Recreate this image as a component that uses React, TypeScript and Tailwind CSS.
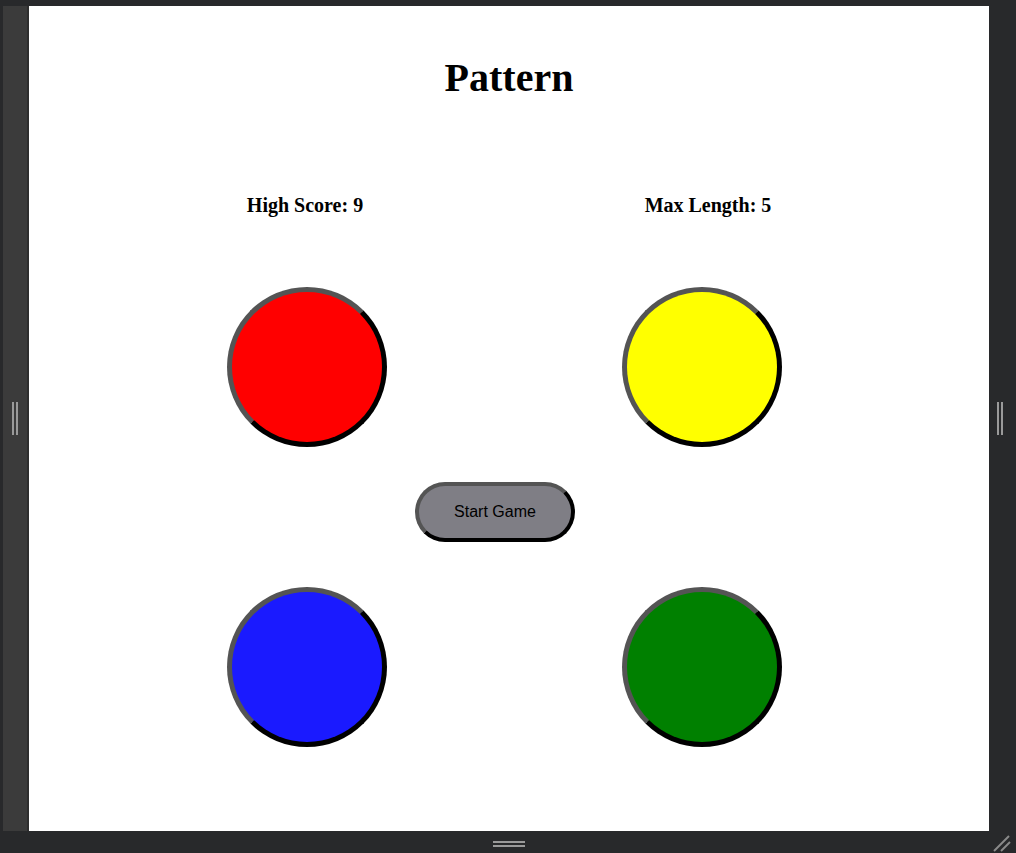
import React from "react";

function Circle({ color }: { color: string }) {
  return (
    <div
      className={`w-[160px] h-[160px] rounded-full border-[5px] border-black [--tw-border-style:outset] [border-style:outset] ${color}`}
    />
  );
}

export default function App() {
  return (
    <div className="relative w-[1016px] h-[853px] bg-[#28292b] flex flex-col overflow-hidden">
      <div className="h-[6px] shrink-0" />
      <div className="flex h-[825px] shrink-0">
        {/* left strip */}
        <div className="w-[29px] shrink-0 flex">
          <div className="w-[3px]" />
          <div className="w-[24px] bg-[#3b3b3b] flex items-center pl-[9px] gap-[2px]">
            <div className="w-[2px] h-[33px] bg-[#9a9a9a]" />
            <div className="w-[2px] h-[33px] bg-[#9a9a9a]" />
          </div>
          <div className="w-[2px] bg-[#2e2e2e]" />
        </div>
        {/* main panel */}
        <div className="w-[960px] shrink-0 bg-white flex flex-col font-['Liberation_Serif','Times_New_Roman',serif] text-black">
          <h1 className="mt-[50px] text-center text-[40px] leading-[44px] font-bold">Pattern</h1>
          <div className="mt-[93px] flex pl-[176px] gap-[203px] text-[20px] leading-[24px] font-bold">
            <div className="w-[200px] text-center">High Score: 9</div>
            <div className="w-[200px] text-center">Max Length: 5</div>
          </div>
          <div className="mt-[70px] flex pl-[198px] gap-[235px]">
            <Circle color="bg-[#ff0000]" />
            <Circle color="bg-[#ffff00]" />
          </div>
          <div className="mt-[35px] pl-[386px]">
            <button className="w-[160px] h-[60px] rounded-full border-[4px] border-black [--tw-border-style:outset] [border-style:outset] bg-[#7f7e85] font-['Liberation_Sans',Arial,sans-serif] text-[16px] text-black flex items-center justify-center">
              Start Game
            </button>
          </div>
          <div className="mt-[45px] flex pl-[198px] gap-[235px]">
            <Circle color="bg-[#1a1aff]" />
            <Circle color="bg-[#008000]" />
          </div>
        </div>
        {/* right strip */}
        <div className="w-[27px] shrink-0 flex items-center pl-[8px] gap-[2px]">
          <div className="w-[2px] h-[33px] bg-[#9a9a9a]" />
          <div className="w-[2px] h-[33px] bg-[#9a9a9a]" />
        </div>
      </div>
      {/* bottom bar */}
      <div className="h-[22px] shrink-0 flex flex-col items-center pt-[10px] gap-[2px] pl-[2px]">
        <div className="w-[32px] h-[2px] bg-[#9a9a9a]" />
        <div className="w-[32px] h-[2px] bg-[#9a9a9a]" />
      </div>
      <svg className="absolute right-[4px] bottom-[1px]" width="20" height="20" viewBox="0 0 20 20">
        <line x1="2" y1="19" x2="17" y2="4" stroke="#8a8a8a" strokeWidth="2" />
        <line x1="9" y1="19" x2="18" y2="10" stroke="#8a8a8a" strokeWidth="2" />
      </svg>
    </div>
  );
}
